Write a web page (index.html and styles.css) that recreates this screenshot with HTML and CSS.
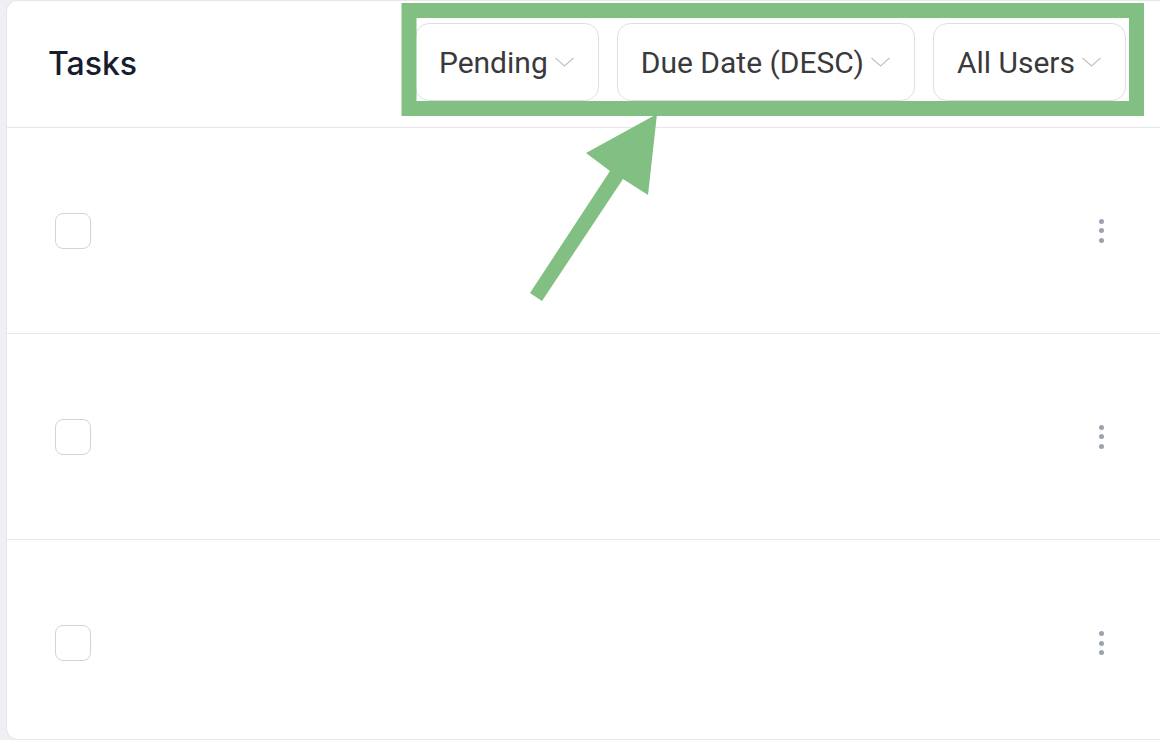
FILE: index.html
```html
<!DOCTYPE html>
<html lang="en">
<head>
    <meta charset="UTF-8">
    <title>Tasks</title>
    <link rel="stylesheet" href="styles.css">
</head>
<body>
    <div class="card">
        <div class="card-header">
            <h1 class="title">Tasks</h1>
            <div class="filters">
                <button class="select">Pending
                    <svg class="chevron" viewBox="0 0 20 10"><polyline points="1,1 10,9 19,1"/></svg>
                </button>
                <button class="select">Due Date (DESC)
                    <svg class="chevron" viewBox="0 0 20 10"><polyline points="1,1 10,9 19,1"/></svg>
                </button>
                <button class="select">All Users
                    <svg class="chevron" viewBox="0 0 20 10"><polyline points="1,1 10,9 19,1"/></svg>
                </button>
            </div>
        </div>

        <div class="task-row">
            <span class="checkbox"></span>
            <span class="kebab"><i></i><i></i><i></i></span>
        </div>
        <div class="task-row">
            <span class="checkbox"></span>
            <span class="kebab"><i></i><i></i><i></i></span>
        </div>
        <div class="task-row">
            <span class="checkbox"></span>
            <span class="kebab"><i></i><i></i><i></i></span>
        </div>
    </div>

    <!-- annotation drawn over the screenshot -->
    <svg class="annotation" viewBox="0 0 1160 740">
        <rect x="409" y="10.5" width="727.5" height="98" fill="none" stroke="#82bf82" stroke-width="15"/>
        <polygon points="530,293 610,171 586,153 657,114 648,195 623,179 542,301" fill="#82bf82"/>
    </svg>
</body>
</html>
```

FILE: styles.css
```css
* {
    margin: 0;
    padding: 0;
    box-sizing: border-box;
}

body {
    background: #eef0f3;
    font-family: Roboto, 'Liberation Sans', sans-serif;
    width: 1160px;
    height: 740px;
    overflow: hidden;
    position: relative;
}

.card {
    margin-left: 6px;
    height: 740px;
    background: #fff;
    border: 1px solid #e5e7eb;
    border-right: none;
    border-radius: 12px 0 0 12px;
    overflow: hidden;
}

.card-header {
    height: 127px;
    display: flex;
    align-items: center;
    justify-content: space-between;
    padding: 0 34px 4px 41px;
    border-bottom: 1px solid #e5e7eb;
}

.title {
    font-family: Inter, 'Noto Sans', sans-serif;
    font-weight: 500;
    font-size: 32px;
    color: #161d2e;
    margin-top: 2px;
}

.filters {
    display: flex;
    gap: 18px;
}

.select {
    height: 78px;
    display: flex;
    align-items: center;
    gap: 6px;
    padding: 0 23px 0 23px;
    background: #fff;
    border: 1.5px solid #dedee2;
    border-radius: 14px;
    font-family: Roboto, 'Liberation Sans', sans-serif;
    font-size: 30px;
    color: #3a3a3c;
}

.chevron {
    width: 21px;
    height: 10px;
    fill: none;
    stroke: #c4c4c8;
    stroke-width: 1.3;
}

.task-row {
    height: 206px;
    display: flex;
    align-items: center;
    justify-content: space-between;
    padding: 0 56px 0 48px;
    border-bottom: 1px solid #e5e7eb;
}

.task-row:last-child {
    border-bottom: none;
}

.checkbox {
    width: 36px;
    height: 36px;
    border: 1.5px solid #d1d5db;
    border-radius: 8px;
}

.kebab {
    display: flex;
    flex-direction: column;
    gap: 4.5px;
}

.kebab i {
    width: 5px;
    height: 5px;
    border-radius: 50%;
    background: #9ca3af;
}

.annotation {
    position: absolute;
    top: 0;
    left: 0;
    width: 1160px;
    height: 740px;
    pointer-events: none;
}
```
